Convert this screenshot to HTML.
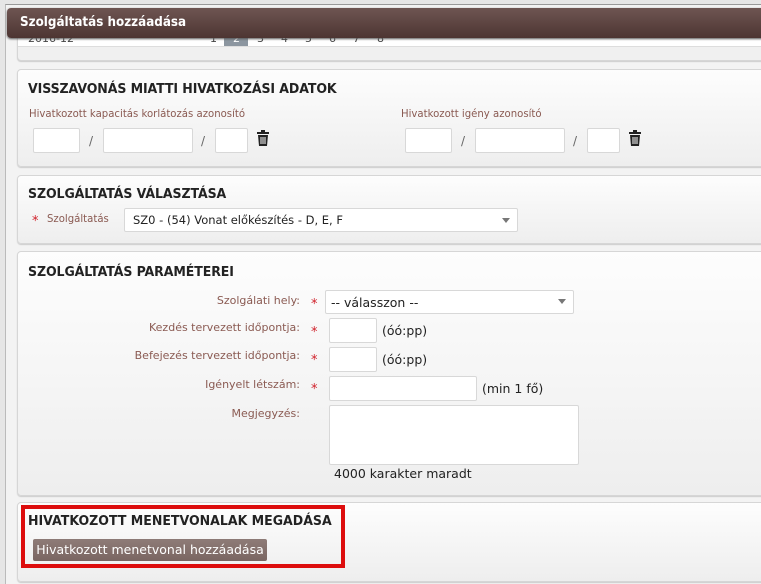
<!DOCTYPE html>
<html><head><meta charset="utf-8"><style>
*{box-sizing:border-box;margin:0;padding:0}
body{width:761px;height:571px;overflow:hidden;background:#e6e6e6;font-family:"DejaVu Sans","Liberation Sans",sans-serif;position:relative}
.a{position:absolute}
.outer{left:5px;top:4px;width:760px;height:580px;background:#f3f3f3;border-left:1px solid #bbb;border-top:1px solid #999}
.panel{position:absolute;left:17px;width:760px;border:1px solid #d6d6d6;border-radius:4px;background:linear-gradient(#fdfdfd,#eeeeee);box-shadow:0 1px 1px #ccc}
.h{position:absolute;left:10px;font-weight:bold;font-size:13.5px;color:#222;letter-spacing:-0.1px;font-family:"DejaVu Sans",sans-serif;transform:scaleX(0.93);transform-origin:left}
.lbl{font-size:11px;color:#8a5a52;transform:scaleX(0.92);transform-origin:left;white-space:nowrap}
.rl{font-size:11px;color:#8a5a52;white-space:nowrap;text-align:right;width:300px}
.in{position:absolute;background:#fff;border:1px solid #d8d8d8;border-radius:2px}
.t{font-size:12.5px;color:#222;white-space:nowrap}
.star{color:#d0202a;font-size:13px}
.sl{font-size:12px;color:#666}
.pn{position:absolute;top:32px;font-size:11px;color:#444}
</style></head><body>
<div class="a outer"></div>
<div class="panel" style="top:22px;height:39px;background:#f0f0f0"></div>
<div class="a" style="left:18px;top:30px;width:743px;height:17px;background:#fff;border-bottom:1px solid #ddd"></div>
<div class="a t" style="left:28px;top:32px;color:#444;font-size:11px">2016-12</div>
<div class="a" style="left:224px;top:30px;width:24px;height:16px;background:#8c96a0"></div>
<div class="pn" style="left:210px">1</div>
<div class="pn" style="left:233px;color:#fff">2</div>
<div class="pn" style="left:257px">3</div>
<div class="pn" style="left:281px">4</div>
<div class="pn" style="left:305px">5</div>
<div class="pn" style="left:329px">6</div>
<div class="pn" style="left:353px">7</div>
<div class="pn" style="left:377px">8</div>
<div class="a" style="left:7px;top:8px;width:760px;height:30px;background:linear-gradient(#6e5552,#4d3532);border-radius:4px 0 0 4px;box-shadow:0 1px 2px #555"></div>
<div class="a" style="left:20px;top:15px;color:#fff;font-weight:bold;font-size:13px;transform:scaleX(0.92);transform-origin:left">Szolgáltatás hozzáadása</div>

<div class="panel" style="top:69px;height:98px">
<div class="h" style="top:11px">VISSZAVONÁS MIATTI HIVATKOZÁSI ADATOK</div>
<div class="a lbl" style="left:11px;top:37px">Hivatkozott kapacitás korlátozás azonosító</div>
<div class="in" style="left:15px;top:58px;width:47px;height:25px"></div>
<div class="a sl" style="left:71px;top:64px">/</div>
<div class="in" style="left:85px;top:58px;width:90px;height:25px"></div>
<div class="a sl" style="left:183px;top:64px">/</div>
<div class="in" style="left:197px;top:58px;width:33px;height:25px"></div>
<svg class="a" style="left:238px;top:60px" width="14" height="16" viewBox="0 0 14 16"><rect x="1" y="2" width="12" height="2" fill="#222"/><rect x="5" y="0" width="4" height="2" fill="#222"/><path d="M2 5h10l-1 11H3z" fill="#222"/><path d="M5 7v7M7 7v7M9 7v7" stroke="#fff" stroke-width="1"/></svg>
<div class="a lbl" style="left:383px;top:37px">Hivatkozott igény azonosító</div>
<div class="in" style="left:387px;top:58px;width:47px;height:25px"></div>
<div class="a sl" style="left:443px;top:64px">/</div>
<div class="in" style="left:457px;top:58px;width:90px;height:25px"></div>
<div class="a sl" style="left:555px;top:64px">/</div>
<div class="in" style="left:569px;top:58px;width:33px;height:25px"></div>
<svg class="a" style="left:610px;top:60px" width="14" height="16" viewBox="0 0 14 16"><rect x="1" y="2" width="12" height="2" fill="#222"/><rect x="5" y="0" width="4" height="2" fill="#222"/><path d="M2 5h10l-1 11H3z" fill="#222"/><path d="M5 7v7M7 7v7M9 7v7" stroke="#fff" stroke-width="1"/></svg>
</div>

<div class="panel" style="top:175px;height:69px">
<div class="h" style="top:10px">SZOLGÁLTATÁS VÁLASZTÁSA</div>
<div class="a star" style="left:14px;top:38px">*</div>
<div class="a lbl" style="left:29px;top:36px">Szolgáltatás</div>
<div class="in" style="left:106px;top:32px;width:394px;height:24px"></div>
<div class="a t" style="left:115px;top:37px;font-size:11.5px">SZ0 - (54) Vonat előkészítés - D, E, F</div>
<div class="a" style="left:484px;top:42px;border:4px solid transparent;border-top:5px solid #777"></div>
</div>

<div class="panel" style="top:251px;height:245px">
<div class="h" style="top:12px">SZOLGÁLTATÁS PARAMÉTEREI</div>
<div class="a rl" style="left:-18px;top:42px">Szolgálati hely:</div>
<div class="a rl" style="left:-18px;top:69px">Kezdés tervezett időpontja:</div>
<div class="a rl" style="left:-18px;top:97px">Befejezés tervezett időpontja:</div>
<div class="a rl" style="left:-18px;top:126px">Igényelt létszám:</div>
<div class="a rl" style="left:-18px;top:155px">Megjegyzés:</div>
<div class="a star" style="left:293px;top:45px">*</div>
<div class="a star" style="left:293px;top:73px">*</div>
<div class="a star" style="left:293px;top:101px">*</div>
<div class="a star" style="left:293px;top:130px">*</div>
<div class="in" style="left:307px;top:38px;width:249px;height:24px"></div>
<div class="a t" style="left:313px;top:43px">-- válasszon --</div>
<div class="a" style="left:540px;top:47px;border:4px solid transparent;border-top:5px solid #777"></div>
<div class="in" style="left:311px;top:66px;width:48px;height:25px"></div>
<div class="a t" style="left:364px;top:71px">(óó:pp)</div>
<div class="in" style="left:311px;top:95px;width:48px;height:25px"></div>
<div class="a t" style="left:364px;top:100px">(óó:pp)</div>
<div class="in" style="left:311px;top:124px;width:148px;height:25px"></div>
<div class="a t" style="left:464px;top:129px">(min 1 fő)</div>
<div class="in" style="left:311px;top:153px;width:250px;height:60px"></div>
<div class="a t" style="left:316px;top:214px">4000 karakter maradt</div>
</div>

<div class="panel" style="top:502px;height:80px"></div>
<div class="a" style="left:21px;top:505px;width:324px;height:63px;border:4px solid #dd0d0d"></div>
<div class="a" style="left:28px;top:513px;font-weight:bold;font-size:13.5px;color:#222;transform:scaleX(0.93);transform-origin:left">HIVATKOZOTT MENETVONALAK MEGADÁSA</div>
<div class="a" style="left:33px;top:539px;width:234px;height:22px;background:linear-gradient(#8e7c78,#7a6662);border-radius:2px;color:#fff;font-size:12.5px;text-align:center;line-height:21px;white-space:nowrap">Hivatkozott menetvonal hozzáadása</div>
</body></html>
